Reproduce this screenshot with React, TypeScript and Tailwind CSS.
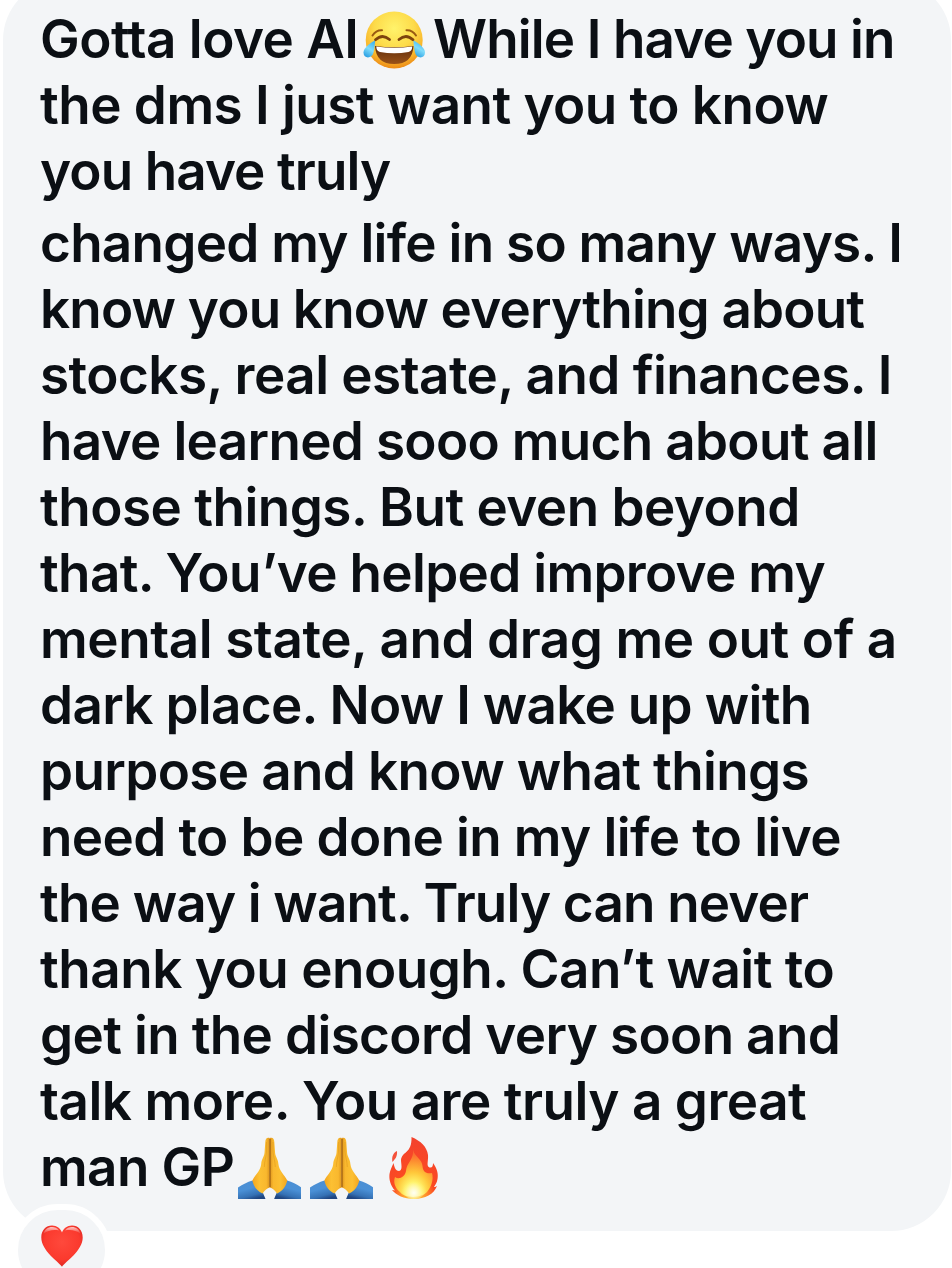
import { clsx } from "clsx";

// ═══════════════════════════════════════════════════════════════
// DIRECT MESSAGE — one long bubble with a heart reaction under it
// ═══════════════════════════════════════════════════════════════

interface Line {
  text: string;
  tracking: string;
}

const INTRO: Line[] = [
  { text: "the dms I just want you to know", tracking: "tracking-[-0.53px]" },
  { text: "you have truly", tracking: "tracking-[-0.9px]" },
];

const BODY: Line[] = [
  { text: "changed my life in so many ways. I", tracking: "tracking-[-0.73px]" },
  { text: "know you know everything about", tracking: "tracking-[-0.82px]" },
  { text: "stocks, real estate, and finances. I", tracking: "tracking-[-0.54px]" },
  { text: "have learned sooo much about all", tracking: "tracking-[-0.68px]" },
  { text: "those things. But even beyond", tracking: "tracking-[-0.52px]" },
  { text: "that. You’ve helped improve my", tracking: "tracking-[-0.69px]" },
  { text: "mental state, and drag me out of a", tracking: "tracking-[-0.42px]" },
  { text: "dark place. Now I wake up with", tracking: "tracking-[-0.69px]" },
  { text: "purpose and know what things", tracking: "tracking-[-0.63px]" },
  { text: "need to be done in my life to live", tracking: "tracking-[-0.6px]" },
  { text: "the way i want. Truly can never", tracking: "tracking-[-0.83px]" },
  { text: "thank you enough. Can’t wait to", tracking: "tracking-[-0.48px]" },
  { text: "get in the discord very soon and", tracking: "tracking-[-0.65px]" },
  { text: "talk more. You are truly a great", tracking: "tracking-[-0.48px]" },
];

function TextLine({ text, tracking }: Line) {
  return <div className={clsx("h-[66px] whitespace-nowrap", tracking)}>{text}</div>;
}

function JoyIcon({ className }: { className?: string }) {
  return (
    <svg viewBox="0 0 63 59" className={className}>
      <defs>
        <radialGradient id="joyFace" cx="0.5" cy="0.3" r="0.7">
          <stop offset="0" stopColor="#fff36b" />
          <stop offset="0.5" stopColor="#fddb4a" />
          <stop offset="0.8" stopColor="#f9b62c" />
          <stop offset="1" stopColor="#ec8a16" />
        </radialGradient>
        <linearGradient id="joyTear" x1="0.7" y1="0" x2="0.3" y2="1">
          <stop offset="0" stopColor="#3fb2ee" />
          <stop offset="0.5" stopColor="#7fdcfa" />
          <stop offset="1" stopColor="#2a9fe3" />
        </linearGradient>
        <linearGradient id="joyMouth" x1="0" y1="0" x2="0" y2="1">
          <stop offset="0" stopColor="#5f2c0c" />
          <stop offset="1" stopColor="#9a5218" />
        </linearGradient>
      </defs>
      <circle cx="31.200" cy="29" r="28.500" fill="url(#joyFace)" />
      {/* brows and closed eyes */}
      <path d="M9.500 24.500 C12 20.500 15 19 19 19.200 M43.500 19.200 C47.500 19 50.500 20.500 53 24.500" fill="none" stroke="#9a5a12" strokeWidth="2" strokeLinecap="round" />
      <path d="M12.500 28.800 C17 24.500 22 24.500 26.500 28.500 M36 28.500 C40.500 24.500 45.500 24.500 50 28.800" fill="none" stroke="#7d430d" strokeWidth="2.800" strokeLinecap="round" />
      <path d="M12 35 Q31.200 37.500 50.500 35 Q49.500 53 31.200 53 Q13 53 12 35Z" fill="url(#joyMouth)" />
      <path d="M13.200 35.500 Q31.200 38 49.300 35.500 Q49 40 45.500 41 Q31.200 43.500 17 41 Q13.500 40 13.200 35.500Z" fill="#fff" />
      <path d="M12 29.500 C7 32 0.500 37 0.500 41.500 C0.500 48 9 48 10.500 41.500 C11.500 37 12 33 12 29.500Z" fill="url(#joyTear)" />
      <path d="M50.500 29.500 C55.500 32 62 37 62 41.500 C62 48 53.500 48 52 41.500 C51 37 50.500 33 50.500 29.500Z" fill="url(#joyTear)" />
    </svg>
  );
}

function PrayIcon({ className }: { className?: string }) {
  return (
    <svg viewBox="0 0 63 62" className={className}>
      <defs>
        <linearGradient id="prayHand" x1="0" y1="0" x2="1" y2="0">
          <stop offset="0" stopColor="#f2a51f" />
          <stop offset="0.4" stopColor="#fcc033" />
          <stop offset="0.8" stopColor="#f9b82e" />
          <stop offset="1" stopColor="#dd941d" />
        </linearGradient>
        <linearGradient id="praySleeve" x1="0.2" y1="0" x2="0.6" y2="1">
          <stop offset="0" stopColor="#4c8fd3" />
          <stop offset="0.45" stopColor="#4a90d6" />
          <stop offset="0.8" stopColor="#3571b4" />
          <stop offset="1" stopColor="#1f4682" />
        </linearGradient>
        <g id="prayHalf">
          <path d="M0 50.500 C5 47.500 9 45 14.500 43.500 L25 56 L27.500 62 H0Z" fill="url(#praySleeve)" />
          <path d="M31.800 1 C28.500 0 27.500 2 27.300 5 L26.500 16 C26 20 23.500 22 23.200 27 C22.500 34 17 38 14.300 43.500 C16 50 19 54 24.500 56.500 C27 53 29 51 31.800 50.500Z" fill="url(#prayHand)" />
          <path d="M28.500 5 V15 C28 21 26.500 24 26.300 30" fill="none" stroke="#dc941a" strokeWidth="0.800" opacity="0.600" />
        </g>
      </defs>
      <use href="#prayHalf" />
      <use href="#prayHalf" transform="translate(63.600 0) scale(-1 1)" />
      <path d="M32 2 V50" stroke="#9d5f10" strokeWidth="1.200" />
    </svg>
  );
}

function FireIcon({ className }: { className?: string }) {
  return (
    <svg viewBox="0 0 50 62" className={className}>
      <defs>
        <radialGradient id="fireOuter" cx="0.5" cy="1" r="0.9">
          <stop offset="0" stopColor="#ffd83a" />
          <stop offset="0.3" stopColor="#ff8f2a" />
          <stop offset="0.5" stopColor="#fb4a22" />
          <stop offset="1" stopColor="#f4432c" />
        </radialGradient>
        <radialGradient id="fireInner" cx="0.5" cy="0.9" r="0.85">
          <stop offset="0" stopColor="#fffef0" />
          <stop offset="0.25" stopColor="#fff36a" />
          <stop offset="0.5" stopColor="#ffc73a" />
          <stop offset="0.8" stopColor="#fd8a30" />
          <stop offset="1" stopColor="#fa6430" />
        </radialGradient>
        <radialGradient id="fireCore" cx="0.5" cy="0.75" r="0.5">
          <stop offset="0" stopColor="#fffff2" />
          <stop offset="1" stopColor="#fff58a" stopOpacity="0" />
        </radialGradient>
      </defs>
      <path d="M22.500 0 C32 4 38 10 39 18 C39.500 24 37 29 40.500 30.500 C43.500 31 44 29 44 26 C48 31 49.500 37 48.500 42 C48 46 46 48 45 50 C46 50 47.500 49.500 48 49 C45 57 36 62 25 62 C15 62 7 58 3 53 L6 53.500 C1 48 0 42 0.500 37 C1 33 3 30 4.500 26 C5.500 31 7 34 10 34 C14 33 12 27 12 23 C13 14 23 17 22.500 0Z" fill="url(#fireOuter)" />
      <path d="M8 14 C4 16 2.500 20 3.500 25 C6 22 8.500 20 8 14Z" fill="#f4513a" />
      <path d="M24 13 C26 20 33 22 33.500 29 C34 35 37 37 43 36 C45 43 42 50 38 55 C33 61 16 62 11 55 C6 51 4 45 6 40 C10 43 16 40 17 34 C17.500 26 25 22 24 13Z" fill="url(#fireInner)" />
      <ellipse cx="25" cy="50" rx="13" ry="12" fill="url(#fireCore)" />
    </svg>
  );
}

function HeartIcon({ className }: { className?: string }) {
  return (
    <svg viewBox="0 0 42 42" className={className}>
      <defs>
        <radialGradient id="heartFill" cx="0.5" cy="0.4" r="0.65">
          <stop offset="0" stopColor="#ff493c" />
          <stop offset="0.65" stopColor="#fb3a2e" />
          <stop offset="1" stopColor="#d5201c" />
        </radialGradient>
        <linearGradient id="heartShine" x1="0" y1="0" x2="0" y2="1">
          <stop offset="0" stopColor="#fff" stopOpacity="0.7" />
          <stop offset="1" stopColor="#fff" stopOpacity="0" />
        </linearGradient>
      </defs>
      <path d="M21 41.800 C18 37 0.300 26 0.300 12.500 C0.300 5 5 0.500 11 0.500 C16 0.500 19.500 3.500 21 7.500 C22.500 3.500 26 0.500 31 0.500 C37 0.500 41.700 5 41.700 12.500 C41.700 26 24 37 21 41.800Z" fill="url(#heartFill)" />
      <path d="M2.500 9 C4 2 13 -0.500 18 5.500 C13 4.500 7 5 2.500 9Z M39.500 9 C38 2 29 -0.500 24 5.500 C29 4.500 35 5 39.500 9Z" fill="url(#heartShine)" />
    </svg>
  );
}

export default function App() {
  return (
    <div className="relative h-[1268px] w-[952px] overflow-hidden bg-white pl-[3px]">
      <div className="-mt-[20px] h-[1251px] w-[948px] rounded-[60px] bg-[#f3f5f7] pt-[26px] pl-[37px] font-['Inter',sans-serif] text-[53px] leading-[66px] font-semibold text-[#0b0f14]">
        <div className="flex h-[66px] whitespace-nowrap">
          <span className="w-[323px] tracking-[-0.5px]">Gotta love AI</span>
          <JoyIcon className="mt-[5px] h-[59px] w-[63px]" />
          <span className="ml-[7px] tracking-[-0.88px]">While I have you in</span>
        </div>
        {INTRO.map((line) => (
          <TextLine key={line.text} {...line} />
        ))}
        <div className="h-[6px]" />
        {BODY.map((line) => (
          <TextLine key={line.text} {...line} />
        ))}
        <div className="flex h-[66px] whitespace-nowrap">
          <span className="w-[198px] tracking-[-0.6px]">man GP</span>
          <PrayIcon className="mt-[3px] h-[62px] w-[63px]" />
          <PrayIcon className="mt-[3px] ml-[9px] h-[62px] w-[63px]" />
          <FireIcon className="mt-[3px] ml-[16px] h-[62px] w-[50px]" />
        </div>
      </div>

      {/* Reaction pill, overlapping the bottom edge of the bubble */}
      <div className="absolute top-[1204px] left-[12px] flex h-[92px] w-[99px] justify-center rounded-[46px] border-[6px] border-white bg-[#f3f5f7] pt-[15px]">
        <HeartIcon className="h-[42px] w-[42px]" />
      </div>
    </div>
  );
}
